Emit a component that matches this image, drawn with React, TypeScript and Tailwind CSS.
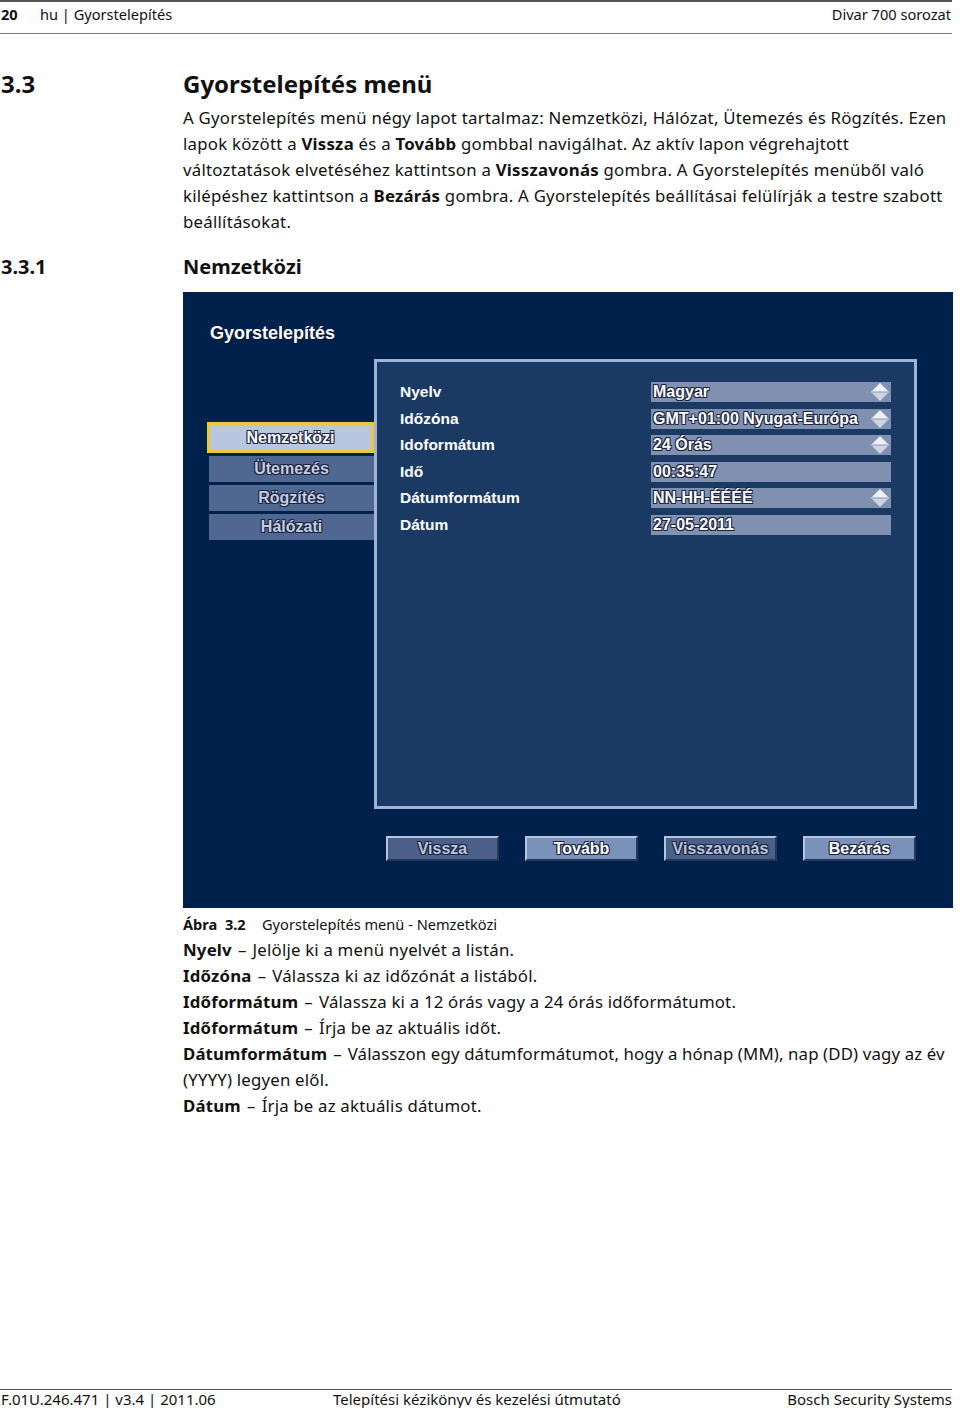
import React from "react";

const doc = "font-['Noto_Sans',sans-serif] text-[#111]";
const osd = "font-['Liberation_Sans',Arial,sans-serif] font-bold";
const outline =
  "[text-shadow:-1px_-1px_0_#1b2440,1px_-1px_0_#1b2440,-1px_1px_0_#1b2440,1px_1px_0_#1b2440]";

const tabs = [
  { label: "Nemzetközi", active: true },
  { label: "Ütemezés" },
  { label: "Rögzítés" },
  { label: "Hálózati" },
];

const rows = [
  { label: "Nyelv", value: "Magyar", spin: true },
  { label: "Időzóna", value: "GMT+01:00 Nyugat-Európa", spin: true },
  { label: "Idoformátum", value: "24 Órás", spin: true },
  { label: "Idő", value: "00:35:47", spin: false },
  { label: "Dátumformátum", value: "NN-HH-ÉÉÉÉ", spin: true },
  { label: "Dátum", value: "27-05-2011", spin: false },
];

const buttons = [
  { label: "Vissza", light: false },
  { label: "Tovább", light: true },
  { label: "Visszavonás", light: false },
  { label: "Bezárás", light: true },
];

const Spinner = () => (
  <svg width="20" height="20" viewBox="0 0 20 20" className="shrink-0">
    <polygon points="10,1 19,10 1,10" fill="#eef1f7" />
    <polygon points="1,10 19,10 10,19" fill="#cdd4e2" />
    <line x1="2" y1="10" x2="18" y2="10" stroke="#8a98b6" strokeWidth="1" />
  </svg>
);

const Dash = () => <span className="mx-[1.5px]">–</span>;

const Osd = () => (
  <div className="ml-[183px] w-[770px] h-[616px] bg-[#00214b] flex flex-col">
    <div className={`${osd} text-white text-[18px] leading-none ml-[27px] mt-[32px] [text-shadow:1px_1px_0_#0a1428]`}>
      Gyorstelepítés
    </div>
    <div className="flex mt-[17px] ml-[24px]">
      <div className="w-[167px] mt-[63px] flex flex-col gap-[3px]">
        {tabs.map((t) =>
          t.active ? (
            <div
              key={t.label}
              className={`${osd} ${outline} h-[31px] bg-[#b9c6e0] border-[3px] border-[#ecc93a] text-white text-[16px] flex items-center justify-center`}
            >
              {t.label}
            </div>
          ) : (
            <div
              key={t.label}
              className={`${osd} ${outline} h-[26px] ml-[2px] bg-[#4f6791] text-[#c3cde2] text-[16px] flex items-center justify-center`}
            >
              {t.label}
            </div>
          )
        )}
      </div>
      <div className="w-[543px] h-[450px] bg-[#1b3a63] border-[3px] border-[#9fb3d3] pt-[20px]">
        <div className="flex flex-col gap-[6.5px]">
          {rows.map((r) => (
            <div key={r.label} className="flex items-center h-[20px]">
              <div className={`${osd} text-white text-[15.5px] w-[274px] pl-[23px]`}>{r.label}</div>
              <div className="w-[240px] h-[20px] bg-[#8090b1] flex items-center justify-between pl-[2px] pr-[1px]">
                <span className={`${osd} ${outline} text-white text-[16px] leading-none`}>{r.value}</span>
                {r.spin && <Spinner />}
              </div>
            </div>
          ))}
        </div>
      </div>
    </div>
    <div className="flex gap-[26px] ml-[203px] mt-[27px]">
      {buttons.map((b) => (
        <div
          key={b.label}
          className={`${osd} w-[113px] h-[25px] border-2 border-t-[#b5c4df] border-l-[#b5c4df] border-b-[#26385a] border-r-[#26385a] flex items-center justify-center text-[16px] ${outline} ${
            b.light ? "bg-[#7a91ba] text-white" : "bg-[#4a6089] text-[#b9c5dc]"
          }`}
        >
          {b.label}
        </div>
      ))}
    </div>
  </div>
);

export default function App() {
  return (
    <div className={`${doc} w-[960px] h-[1408px] bg-white flex flex-col`}>
      <div className="h-[2px] w-[952px] bg-[#555]" />
      <div className="flex items-center h-[25px] w-[952px] text-[14.6px] leading-none pl-[1px] pr-[1px]">
        <span className="font-bold w-[39px]">20</span>
        <span>hu | Gyorstelepítés</span>
        <span className="ml-auto">Divar 700 sorozat</span>
      </div>
      <div className="h-[1px] w-[952px] bg-[#777] mt-[6px]" />

      <div className="flex items-center mt-[35px] h-[30px]">
        <span className="w-[183px] pl-[1px] text-[24px] font-bold">3.3</span>
        <span className="text-[24px] font-bold">Gyorstelepítés menü</span>
      </div>
      <div className="ml-[183px] mt-[6px] text-[16.8px] tracking-[0.24px] leading-[26px] whitespace-nowrap">
        <div>A Gyorstelepítés menü négy lapot tartalmaz: Nemzetközi, Hálózat, Ütemezés és Rögzítés. Ezen</div>
        <div>
          lapok között a <b>Vissza</b> és a <b>Tovább</b> gombbal navigálhat. Az aktív lapon végrehajtott
        </div>
        <div>
          változtatások elvetéséhez kattintson a <b>Visszavonás</b> gombra. A Gyorstelepítés menüből való
        </div>
        <div>
          kilépéshez kattintson a <b>Bezárás</b> gombra. A Gyorstelepítés beállításai felülírják a testre szabott
        </div>
        <div>beállításokat.</div>
      </div>

      <div className="flex items-center mt-[19px] h-[26px]">
        <span className="w-[183px] pl-[1px] text-[20px] font-bold">3.3.1</span>
        <span className="text-[20px] font-bold">Nemzetközi</span>
      </div>
      <div className="mt-[12px]">
        <Osd />
      </div>

      <div className="ml-[183px] mt-[6px] text-[14.6px] leading-[20px] flex">
        <span className="font-bold w-[79px]">Ábra&nbsp; 3.2</span>
        <span>Gyorstelepítés menü - Nemzetközi</span>
      </div>
      <div className="ml-[183px] mt-[3px] text-[16.8px] tracking-[0.2px] leading-[26px] w-[770px] whitespace-nowrap">
        <div><b>Nyelv</b> <Dash /> Jelölje ki a menü nyelvét a listán.</div>
        <div><b>Időzóna</b> <Dash /> Válassza ki az időzónát a listából.</div>
        <div><b>Időformátum</b> <Dash /> Válassza ki a 12 órás vagy a 24 órás időformátumot.</div>
        <div><b>Időformátum</b> <Dash /> Írja be az aktuális időt.</div>
        <div className="tracking-[0.14px]">
          <b>Dátumformátum</b> <Dash /> Válasszon egy dátumformátumot, hogy a hónap (MM), nap (DD) vagy az év
        </div>
        <div>(YYYY) legyen elől.</div>
        <div><b>Dátum</b> <Dash /> Írja be az aktuális dátumot.</div>
      </div>

      <div className="mt-auto mb-[1px]">
        <div className="h-[1px] w-[952px] bg-[#555]" />
        <div className="flex items-center h-[16px] mt-[1px] w-[952px] text-[15px] leading-none pl-[1px]">
          <span className="w-[332px]">F.01U.246.471 | v3.4 | 2011.06</span>
          <span>Telepítési kézikönyv és kezelési útmutató</span>
          <span className="ml-auto">Bosch Security Systems</span>
        </div>
      </div>
    </div>
  );
}
